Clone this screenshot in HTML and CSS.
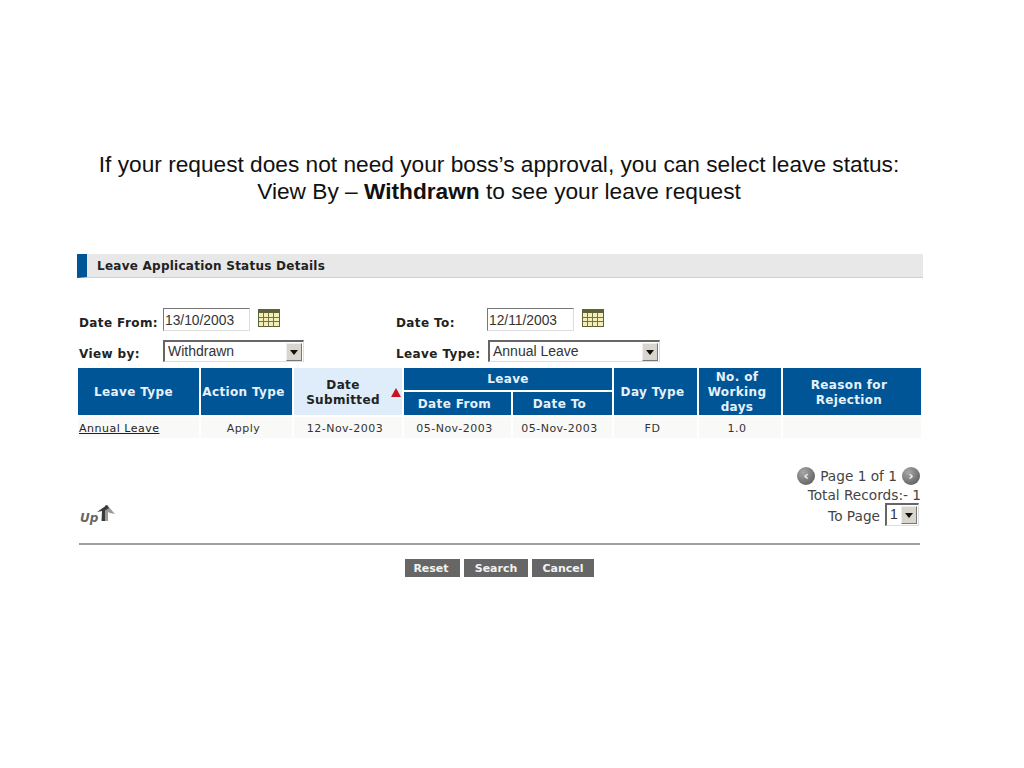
FILE: index.html
```html
<!DOCTYPE html>
<html lang="en">
<head>
<meta charset="utf-8">
<title>Leave Application Status Details</title>
<link rel="stylesheet" href="styles.css">
</head>
<body>
<main class="slide">
  <p class="caption">If your request does not need your boss’s approval, you can select leave status:<br>View By – <b>Withdrawn</b> to see your leave request</p>
  <section class="panel">
    <h1 class="title">Leave Application Status Details</h1>
    <form class="filters">
      <label class="label">Date From:</label>
      <div class="field">
        <input class="date" type="text" value="13/10/2003">
        <svg class="cal" viewBox="0 0 22 18"><rect width="22" height="18" fill="#5d6238"/><rect x="1" y="4" width="20" height="13" fill="#f3eeb8"/><path d="M1 8.5h20M1 12.5h20M5.5 4v13M10.5 4v13M15.5 4v13" stroke="#6f7345" fill="none"/></svg>
      </div>
      <label class="label">Date To:</label>
      <div class="field">
        <input class="date" type="text" value="12/11/2003">
        <svg class="cal" viewBox="0 0 22 18"><rect width="22" height="18" fill="#5d6238"/><rect x="1" y="4" width="20" height="13" fill="#f3eeb8"/><path d="M1 8.5h20M1 12.5h20M5.5 4v13M10.5 4v13M15.5 4v13" stroke="#6f7345" fill="none"/></svg>
      </div>
      <label class="label">View by:</label>
      <div class="field">
        <div class="select view"><span>Withdrawn</span><i class="drop"></i></div>
      </div>
      <label class="label">Leave Type:</label>
      <div class="field">
        <div class="select type"><span>Annual Leave</span><i class="drop"></i></div>
      </div>
    </form>
    <div class="grid">
      <div class="head r2 first">Leave Type</div>
      <div class="head r2">Action Type</div>
      <div class="head r2 sorted"><span>Date<br>Submitted</span><i class="sort"></i></div>
      <div class="head c2">Leave</div>
      <div class="head r2">Day Type</div>
      <div class="head r2 tall">No. of<br>Working<br>days</div>
      <div class="head r2">Reason for<br>Rejection</div>
      <div class="head">Date From</div>
      <div class="head">Date To</div>
      <div class="cell link"><a href="#">Annual Leave</a></div>
      <div class="cell">Apply</div>
      <div class="cell">12-Nov-2003</div>
      <div class="cell">05-Nov-2003</div>
      <div class="cell">05-Nov-2003</div>
      <div class="cell">FD</div>
      <div class="cell">1.0</div>
      <div class="cell"></div>
    </div>
    <div class="foot">
      <div class="up"><span>Up</span><svg class="uparrow" viewBox="0 0 18 17"><path d="M10 0L18 9 13 8 11 7V16H8V0Z" fill="#9a9a9a"/><path d="M10 0L0 7 5 6 4.5 16H8V5.5L12 3Z" fill="#3a3a3a"/></svg></div>
      <div class="pager">
        <div class="pline pagenav"><i class="nav">‹</i><span>Page 1 of 1</span><i class="nav">›</i></div>
        <div class="pline">Total Records:- 1</div>
        <div class="pline gotop"><span class="gotext">To Page</span><div class="select mini"><span>1</span><i class="drop"></i></div></div>
      </div>
    </div>
    <hr class="rule">
    <div class="actions">
      <button class="btn reset" type="button">Reset</button>
      <button class="btn search" type="button">Search</button>
      <button class="btn cancel" type="button">Cancel</button>
    </div>
  </section>
</main>
</body>
</html>
```
FILE: styles.css
```css
* { box-sizing: border-box; }
html, body { margin: 0; background: #fff; }
.slide { width: 1024px; height: 768px; padding-top: 151px; overflow: hidden; }
.caption {
  margin: 0;
  width: 998px;
  text-align: center;
  font: 22.7px/27px "Liberation Sans", Arial, sans-serif;
  color: #111;
}
.panel { margin: 49px 0 0 77px; width: 846px; font-family: "DejaVu Sans", Verdana, sans-serif; color: #222; }
.title {
  margin: 0;
  height: 24px;
  background: #e8e8e8;
  border-left: 10px solid #005596;
  border-bottom: 1px solid #cfcfcf;
  padding-left: 10px;
  font-size: 12px;
  line-height: 24px;
  font-weight: bold;
  letter-spacing: .25px;
  color: #222;
}
.filters {
  display: grid;
  grid-template-columns: 84px 233px 91px 1fr;
  grid-template-rows: 23px 22px;
  row-gap: 9px;
  margin: 30px 0 0 2px;
  height: 60px;
}
.label { font-size: 12px; font-weight: bold; letter-spacing: .4px; line-height: 15px; align-self: end; color: #222; white-space: nowrap; }
.field { display: flex; align-items: flex-start; gap: 8px; }
.date {
  width: 87px; height: 23px; padding: 1px 0 0 1px; margin: 0;
  font: 13.8px "Liberation Sans", Arial, sans-serif; color: #333;
  border: 1px solid #ddd; border-top-color: #777; border-left-color: #777; background: #fff; outline: 0;
}
.cal { width: 22px; height: 18px; margin-top: 1px; }
.select {
  display: flex; align-items: center; justify-content: space-between;
  height: 22px; padding: 0 1px 0 3px;
  font: 14px "Liberation Sans", Arial, sans-serif; color: #333;
  border: 1px solid #ddd; border-top: 2px solid #666; border-left: 2px solid #666; background: #fff;
}
.select span { margin-top: -2px; }
.view { width: 141px; }
.type { width: 172px; margin-left: 1px; }
.drop {
  position: relative; width: 16px; height: 18px; background: #d8d5cc;
  border: 1px solid #777; border-top-color: #eee; border-left-color: #eee;
}
.drop::after {
  content: ""; position: absolute; left: 3px; top: 6px;
  border: 4px solid transparent; border-top: 5px solid #111; border-bottom: 0;
}
.grid {
  display: grid;
  grid-template-columns: 121px 91px 108px 107px 99px 83px 82px 138px;
  grid-template-rows: 22px 23px 21px;
  gap: 2px;
  margin-left: 1px;
  width: 843px;
  font-size: 12px;
}
.head {
  display: flex; align-items: center; justify-content: center; text-align: center;
  background: #005596; color: #e6f1fa; font-weight: bold; letter-spacing: .35px; line-height: 15px;
  white-space: nowrap; padding: 2px 6px 0 0;
}
.r2 { grid-row: span 2; }
.c2 { grid-column: span 2; padding: 0; }
.first { padding-right: 10px; }
.sorted { position: relative; background: #deedf9; color: #222; padding-right: 10px; }
.sort {
  position: absolute; right: 1px; top: 20px;
  border: 5px solid transparent; border-bottom: 9px solid #c8141c; border-top: 0;
}
.cell {
  display: flex; align-items: center; justify-content: center;
  background: #f9f9f7; font-size: 11px; letter-spacing: .5px; color: #333;
  padding: 2px 6px 0 0;
}
.link { justify-content: flex-start; padding-left: 1px; padding-right: 0; }
.link a { color: #222; }
.foot { display: flex; justify-content: space-between; align-items: flex-end; margin: 28px 0 0 3px; width: 841px; height: 60px; }
.up { display: flex; align-items: flex-end; margin-bottom: 1px; }
.up span { font-size: 12px; font-weight: bold; font-style: italic; color: #666; line-height: 14px; margin-right: -1px; }
.uparrow { width: 18px; height: 17px; margin: 0 0 3px 0; }
.pager { font-size: 13.7px; color: #444; text-align: right; display: flex; flex-direction: column; align-items: flex-end; }
.pline { display: flex; align-items: center; justify-content: flex-end; gap: 5px; height: 19px; white-space: nowrap; }
.pagenav { margin-right: 1px; }
.gotop { height: 22px; }
.gotext { padding-top: 2px; }
.nav {
  display: flex; align-items: center; justify-content: center;
  width: 18px; height: 18px; border-radius: 50%; color: #f2f2f2;
  background: radial-gradient(circle at 35% 30%, #a8a8a8, #666 75%);
  font-style: normal; font-weight: bold; font-size: 13px; line-height: 1;
}
.mini { width: 34px; height: 23px; padding: 0 1px 0 3px; margin: -1px 2px 0 0; }
.rule { margin: 17px 0 0 2px; width: 841px; height: 2px; border: 0; background: #a0a0a0; }
.actions { display: flex; gap: 4px; margin: 14px 0 0 328px; }
.btn {
  height: 18px; padding: 0; border: 0; background: #666; color: #f2f2f2;
  font: bold 11px "DejaVu Sans", Verdana, sans-serif;
}
.reset { width: 55px; padding-right: 3px; }
.search { width: 64px; }
.cancel { width: 62px; }
```
